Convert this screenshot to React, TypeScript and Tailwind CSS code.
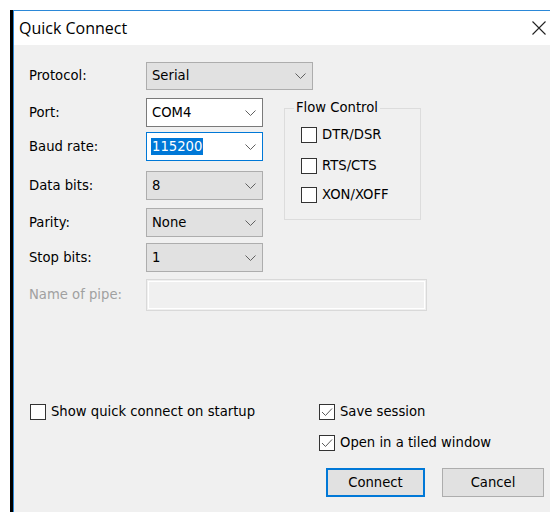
import React from "react";

const ui = { fontFamily: '"DejaVu Sans", Tahoma, sans-serif' };
const title = { fontFamily: '"Open Sans", "Segoe UI", sans-serif' };

function Chevron() {
  return (
    <svg width="11" height="6" viewBox="0 0 11 6" className="shrink-0">
      <polyline points="0.5,0.5 5.5,5.5 10.5,0.5" fill="none" stroke="#606060" strokeWidth="1" />
    </svg>
  );
}

function Combo({
  value,
  className,
  selected,
}: {
  value: string;
  className: string;
  selected?: boolean;
}) {
  return (
    <div className={`flex items-center justify-between pl-[4px] pr-[6px] border ${className}`}>
      {selected ? (
        <span className="bg-[#0078d7] text-white px-px leading-[17px]">{value}</span>
      ) : (
        <span className="pl-px">{value}</span>
      )}
      <Chevron />
    </div>
  );
}

function Field({
  label,
  children,
  className = "",
  labelClass = "",
}: {
  label: string;
  children: React.ReactNode;
  className?: string;
  labelClass?: string;
}) {
  return (
    <div className={`flex items-center ${className}`}>
      <span className={`w-[117px] shrink-0 ${labelClass}`}>{label}</span>
      {children}
    </div>
  );
}

function Check({ label, checked, className = "" }: { label: string; checked?: boolean; className?: string }) {
  return (
    <label className={`flex items-center h-[16px] ${className}`}>
      <span className="w-[16px] h-[16px] border border-[#333333] bg-white flex items-center justify-center shrink-0">
        {checked && (
          <svg width="12" height="10" viewBox="0 0 12 10">
            <polyline points="1,5 4.5,8.5 11,1.5" fill="none" stroke="#5a5a5a" strokeWidth="1" />
          </svg>
        )}
      </span>
      <span className="ml-[5px] whitespace-nowrap">{label}</span>
    </label>
  );
}

export default function App() {
  return (
    <div className="w-[550px] h-[512px] bg-white pl-[10px] pt-[10px] overflow-hidden">
      <div className="h-full border-l-[3px] border-black">
        <div className="h-full flex flex-col border-l border-t border-[#2b88d8]">
          <div className="h-[34px] bg-white flex items-center justify-between pl-[5px] pr-[4px] shrink-0">
            <span className="text-[16px] text-black" style={title}>
              Quick Connect
            </span>
            <svg width="14" height="14" viewBox="0 0 14 14">
              <path d="M0.5 0.5 L13.5 13.5 M13.5 0.5 L0.5 13.5" stroke="#222222" strokeWidth="1.1" />
            </svg>
          </div>

          <div className="flex-1 bg-[#f0f0f0] pl-[15px] pt-[17px] text-[13.2px] text-black" style={ui}>
            <Field label="Protocol:">
              <Combo value="Serial" className="w-[167px] h-[28px] bg-[#e1e1e1] border-[#adadad]" />
            </Field>

            <div className="flex mt-[8px]">
              <div className="flex flex-col">
                <Field label="Port:">
                  <Combo value="COM4" className="w-[117px] h-[29px] bg-white border-[#7a7a7a]" />
                </Field>
                <Field label="Baud rate:" className="mt-[5px]">
                  <Combo value="115200" selected className="w-[117px] h-[29px] bg-white border-[#0078d7]" />
                </Field>
                <Field label="Data bits:" className="mt-[10px]">
                  <Combo value="8" className="w-[117px] h-[29px] bg-[#e1e1e1] border-[#adadad]" />
                </Field>
                <Field label="Parity:" className="mt-[8px]">
                  <Combo value="None" className="w-[117px] h-[29px] bg-[#e1e1e1] border-[#adadad]" />
                </Field>
                <Field label="Stop bits:" className="mt-[6px]">
                  <Combo value="1" className="w-[117px] h-[29px] bg-[#e1e1e1] border-[#adadad]" />
                </Field>
              </div>

              <fieldset className="ml-[21px] mt-[1px] w-[137px] h-[121px] border border-[#dcdcdc]">
                <legend className="ml-[9px] px-[2px] leading-[18px]">Flow Control</legend>
                <div className="pl-[16px]">
                  <Check label="DTR/DSR" className="mt-[10px]" />
                  <Check label="RTS/CTS" className="mt-[15px]" />
                  <Check label="XON/XOFF" className="mt-[13px]" />
                </div>
              </fieldset>
            </div>

            <Field label="Name of pipe:" className="mt-[7px]" labelClass="text-[#a0a0a0]">
              <div className="w-[281px] h-[32px] border border-[#d9d9d9] p-px">
                <div className="h-full border border-white" />
              </div>
            </Field>

            <div className="flex mt-[93px]">
              <div className="w-[290px] pl-[1px]">
                <Check label="Show quick connect on startup" />
              </div>
              <div className="flex flex-col">
                <Check label="Save session" checked />
                <Check label="Open in a tiled window" checked className="mt-[15px]" />
                <div className="flex ml-[7px] mt-[17px]">
                  <button className="w-[99px] h-[29px] bg-[#e1e1e1] border-2 border-[#0078d7]">Connect</button>
                  <button className="ml-[17px] w-[102px] h-[29px] bg-[#e1e1e1] border border-[#adadad]">Cancel</button>
                </div>
              </div>
            </div>
          </div>
        </div>
      </div>
    </div>
  );
}
